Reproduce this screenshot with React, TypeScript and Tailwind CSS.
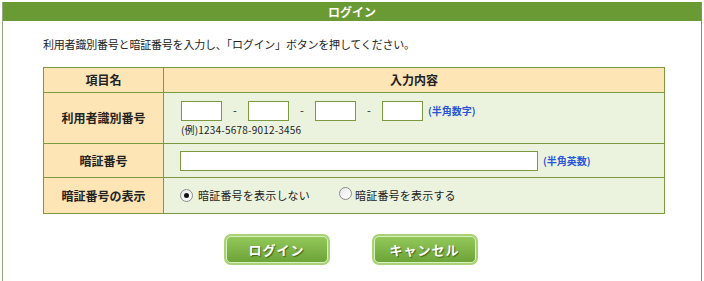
import React from "react";

const jp = { fontFamily: '"Noto Sans CJK JP", "Noto Sans", sans-serif' };

function Radio({ checked }: { checked?: boolean }) {
  return (
    <span className="inline-flex h-[13px] w-[13px] items-center justify-center rounded-full border border-[#8a8a8a] bg-gradient-to-br from-[#e8e8e8] to-white">
      {checked && <span className="h-[5px] w-[5px] rounded-full bg-[#111]" />}
    </span>
  );
}

function Btn({ label }: { label: string }) {
  return (
    <div className="flex h-[31px] w-[106px] items-center justify-center rounded-[7px] bg-[#a9d276] p-[2px]">
      <div className="flex h-full w-full items-center justify-center rounded-[5px] border border-[#d8efbf] bg-gradient-to-b from-[#93c75a] to-[#6da437] text-[13px] font-bold tracking-[1px] text-white [text-shadow:1px_1px_1px_#3d6418]">
        {label}
      </div>
    </div>
  );
}

export default function App() {
  return (
    <div className="h-[281px] w-[704px] overflow-hidden bg-white text-[#222]" style={jp}>
      <div className="ml-[2px] mt-[2px] h-[279px] w-[700px] border-l border-r border-l-[#9aa88a] border-r-[#7a9f45] bg-white">
        <div className="flex h-[19px] items-center justify-center bg-[#6a9a33] text-[12px] font-bold leading-none text-white">
          ログイン
        </div>
        <div className="pl-[40px] pt-[15px] text-[11px] leading-[16px] tracking-[-0.2px] text-[#222]">
          利用者識別番号と暗証番号を入力し、「ログイン」ボタンを押してください。
        </div>
        <table className="ml-[40px] mt-[15px] w-[622px] border-collapse border border-[#7b9a3f] text-[12px]">
          <tbody>
            <tr className="h-[25px]">
              <th className="w-[120px] border border-[#7b9a3f] bg-[#fde5b6] font-bold">項目名</th>
              <th className="border border-[#7b9a3f] bg-[#fde5b6] font-bold">入力内容</th>
            </tr>
            <tr className="h-[51px]">
              <th className="border border-[#7b9a3f] bg-[#fde5b6] font-bold">利用者識別番号</th>
              <td className="border border-[#7b9a3f] bg-[#ebf3df] pl-[17px]">
                <div className="flex items-center">
                  <span className="h-[20px] w-[41px] border border-[#7b9a3f] bg-white" />
                  <span className="w-[26px] text-center text-[11px]">-</span>
                  <span className="h-[20px] w-[41px] border border-[#7b9a3f] bg-white" />
                  <span className="w-[26px] text-center text-[11px]">-</span>
                  <span className="h-[20px] w-[41px] border border-[#7b9a3f] bg-white" />
                  <span className="w-[26px] text-center text-[11px]">-</span>
                  <span className="h-[20px] w-[41px] border border-[#7b9a3f] bg-white" />
                  <span className="ml-[5px] text-[10px] font-bold text-[#2a55d6]">(半角数字)</span>
                </div>
                <div className="mt-[3px] text-[10px] leading-[12px] tracking-[0.2px]">(例)1234-5678-9012-3456</div>
              </td>
            </tr>
            <tr className="h-[34px]">
              <th className="border border-[#7b9a3f] bg-[#fde5b6] font-bold">暗証番号</th>
              <td className="border border-[#7b9a3f] bg-[#ebf3df] pl-[16px]">
                <div className="flex items-center">
                  <span className="h-[20px] w-[358px] border border-[#7b9a3f] bg-white" />
                  <span className="ml-[5px] text-[10px] font-bold text-[#2a55d6]">(半角英数)</span>
                </div>
              </td>
            </tr>
            <tr className="h-[36px]">
              <th className="border border-[#7b9a3f] bg-[#fde5b6] font-bold">暗証番号の表示</th>
              <td className="border border-[#7b9a3f] bg-[#ebf3df] pl-[16px] text-[11px]">
                <div className="flex items-center">
                  <Radio checked />
                  <span className="ml-[5px] tracking-[0.2px]">暗証番号を表示しない</span>
                  <span className="ml-[29px]"><Radio /></span>
                  <span className="ml-[3px] tracking-[0.2px]">暗証番号を表示する</span>
                </div>
              </td>
            </tr>
          </tbody>
        </table>
        <div className="mt-[20px] flex justify-center gap-[42px] pr-[3px]">
          <Btn label="ログイン" />
          <Btn label="キャンセル" />
        </div>
      </div>
    </div>
  );
}
